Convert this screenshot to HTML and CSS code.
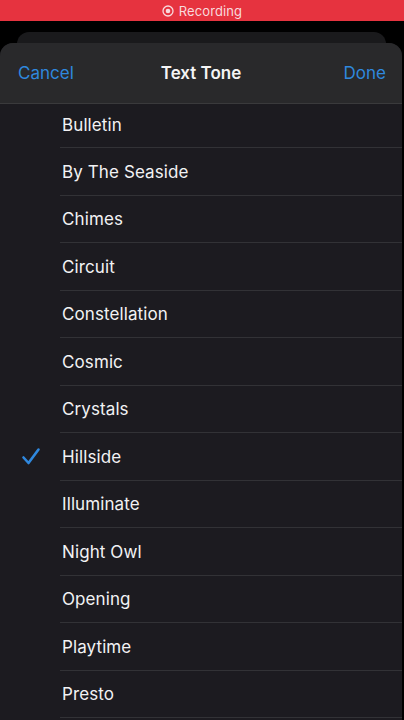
FILE: index.html
```html
<!DOCTYPE html>
<html>
<head>
<meta charset="utf-8">
<link rel="stylesheet" href="styles.css">
</head>
<body>
<div class="rec">
  <svg class="rec-icon" width="12" height="12" viewBox="0 0 12 12"><circle cx="6" cy="6" r="5" fill="none" stroke="#f8dadd" stroke-width="1.3"/><circle cx="6" cy="6" r="2.3" fill="#f8dadd"/></svg>
  <span>Recording</span>
</div>
<div class="stage">
  <div class="backcard"></div>
  <div class="sheet">
    <div class="nav">
      <span class="btn">Cancel</span>
      <span class="title">Text Tone</span>
      <span class="btn">Done</span>
    </div>
    <div class="list">
      <div class="row first"><span class="check"></span><span class="label">Bulletin</span></div>
      <div class="row"><span class="check"></span><span class="label">By The Seaside</span></div>
      <div class="row"><span class="check"></span><span class="label">Chimes</span></div>
      <div class="row"><span class="check"></span><span class="label">Circuit</span></div>
      <div class="row"><span class="check"></span><span class="label">Constellation</span></div>
      <div class="row"><span class="check"></span><span class="label">Cosmic</span></div>
      <div class="row"><span class="check"></span><span class="label">Crystals</span></div>
      <div class="row"><span class="check"><svg width="20" height="20" viewBox="0 0 20 20"><path d="M2.5 10.5 L7.5 16 L17.5 2.5" fill="none" stroke="#2f88de" stroke-width="2.6" stroke-linecap="round" stroke-linejoin="round"/></svg></span><span class="label">Hillside</span></div>
      <div class="row"><span class="check"></span><span class="label">Illuminate</span></div>
      <div class="row"><span class="check"></span><span class="label">Night Owl</span></div>
      <div class="row"><span class="check"></span><span class="label">Opening</span></div>
      <div class="row"><span class="check"></span><span class="label">Playtime</span></div>
      <div class="row"><span class="check"></span><span class="label">Presto</span></div>
    </div>
  </div>
</div>
</body>
</html>
```

FILE: styles.css
```css
html, body {
  margin: 0;
  padding: 0;
  background: #000;
  height: 720px;
  overflow: hidden;
  font-family: Inter, "Liberation Sans", sans-serif;
}

.rec {
  height: 21px;
  background: #e6333f;
  display: flex;
  align-items: center;
  justify-content: center;
  gap: 5px;
  color: #f8dadd;
  font-size: 13px;
  letter-spacing: 0.1px;
}

.rec-icon {
  display: block;
}

.stage {
  position: relative;
  padding-top: 22px;
}

.backcard {
  position: absolute;
  top: 11px;
  left: 17px;
  right: 18px;
  height: 40px;
  background: #1a1a1c;
  border-radius: 12px;
}

.sheet {
  position: relative;
  margin-right: 2px;
  background: #1c1b20;
  border-radius: 13px 13px 0 0;
  overflow: hidden;
  height: 677px;
}

.nav {
  height: 60px;
  background: #29292b;
  border-bottom: 1px solid #3a3a3c;
  display: flex;
  align-items: center;
  justify-content: space-between;
  padding: 0 16px 0 18px;
}

.btn {
  color: #2f88de;
  font-size: 17px;
}

.title {
  color: #f4f4f4;
  font-size: 17px;
  font-weight: 600;
  position: absolute;
  left: 0;
  right: 0;
  top: 20px;
  text-align: center;
  pointer-events: none;
}

.list {
  display: flex;
  flex-direction: column;
}

.row {
  height: 47.5px;
  flex: none;
  box-sizing: border-box;
  display: flex;
  align-items: center;
  position: relative;
}

.row::after {
  content: "";
  position: absolute;
  left: 60px;
  right: 0;
  bottom: 0;
  height: 1px;
  background: #323236;
}

.row.first {
  height: 44px;
  padding-bottom: 3px;
}

.check {
  width: 62px;
  display: flex;
  justify-content: flex-start;
  padding-left: 21px;
  box-sizing: border-box;
}

.check svg {
  display: block;
}

.label {
  color: #f2f2f4;
  font-size: 17px;
  letter-spacing: 0.1px;
}
```
